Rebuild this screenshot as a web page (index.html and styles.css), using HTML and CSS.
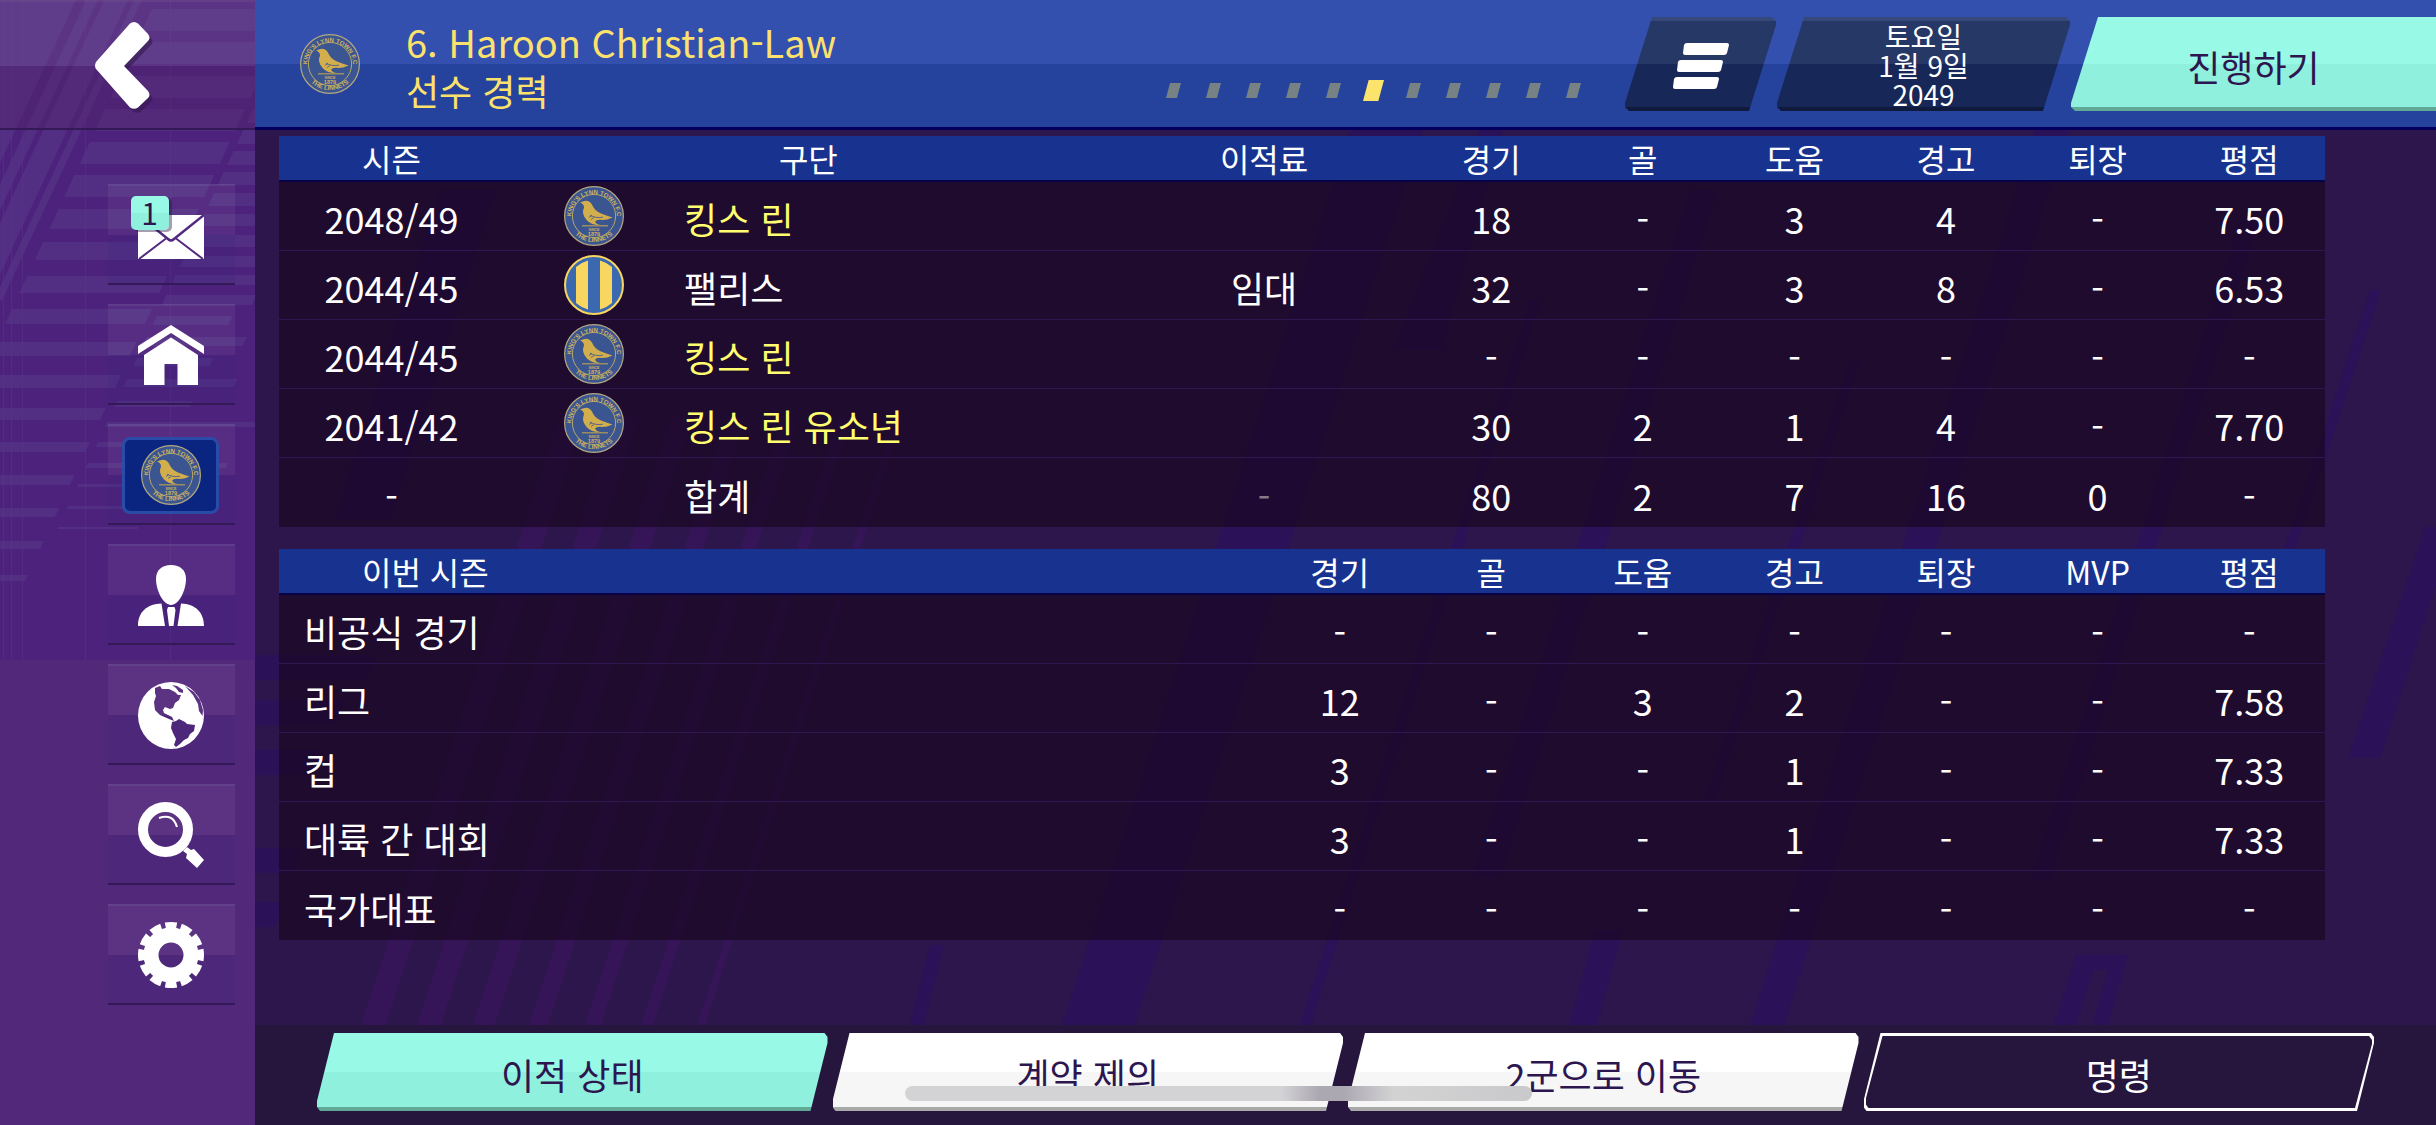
FILE: index.html
```html
<!DOCTYPE html>
<html lang="ko">
<head>
    <meta charset="UTF-8">
    <meta name="viewport" content="width=device-width, initial-scale=1.0">
    <title>선수 경력</title>
    <link rel="stylesheet" href="styles.css">
</head>
<body>
    <!-- shared club crests -->
    <svg class="defs" width="0" height="0" aria-hidden="true">
        <defs>
            <path id="arc-top" d="M7.5 36 A23 23 0 1 1 52.5 36"/>
            <path id="arc-bottom" d="M5 40 A27.5 27.5 0 0 0 55 40"/>
            <symbol id="crest-lynn" viewBox="0 0 60 60">
                <circle cx="30" cy="30" r="29.4" fill="#3a5590" stroke="#b5a981" stroke-width="1.2"/>
                <circle cx="30" cy="30" r="21.6" fill="none" stroke="#b5a768" stroke-width="1"/>
                <path fill="#d3ae4d" d="M16 16.6 L19.5 15.2 Q25 13.5 28 18.6 Q30 24.5 37 27.5 Q42 29.5 48.5 31.4 Q42 34.5 36 33.8 Q31 34 31.3 36 Q32 38 36 39 Q28.500 39.500 23 34.500 Q17 28 20 21.500 Q20 18 16 16.600Z"/>
                <path fill="none" stroke="#3a5590" stroke-width=".8" d="M26 29 Q31 32.5 39 31.2 M25 31.500 L28 29.500 M27 33.500 L30 31.500"/>
                <path stroke="#b39c55" stroke-width="1.2" d="M18 39.800 H44"/>
                <text x="30" y="44.600" class="crest-text" font-size="3.600" text-anchor="middle">SINCE</text>
                <text x="30" y="49.600" class="crest-text" font-size="5.600" text-anchor="middle">1879</text>
                <text class="crest-text" font-size="6.200" text-anchor="middle"><textPath href="#arc-top" startOffset="50%">KING'S LYNN TOWN F.C</textPath></text>
                <text class="crest-text" font-size="6.400" text-anchor="middle"><textPath href="#arc-bottom" startOffset="50%">THE LINNETS</textPath></text>
            </symbol>
            <symbol id="crest-palace" viewBox="0 0 60 60">
                <circle cx="30" cy="30" r="29" fill="#3b69b0" stroke="#f8d660" stroke-width="2"/>
                <path fill="#f8d660" d="M12 12 Q17 7.500 24 5.500 V54.500 Q17 52.500 12 48Z M36 5.500 Q43 7.500 48 12 V48 Q43 52.500 36 54.500Z"/>
            </symbol>
        </defs>
    </svg>

    <aside class="sidebar">
        <svg class="sidebar-art" viewBox="0 0 255 660" preserveAspectRatio="none" aria-hidden="true">
            <rect width="255" height="660" fill="#4d227c"/>
            <g fill="#532f84" transform="skewX(-25)">
                <path d="M0 0h76v400h-76z M86 0h12v300h-12z M104 0h24v310h-24z M134 0h8v300h-8z"/>
                <path d="M156 9h140v22h-140z M156 42h140v22h-140z M156 76h140v22h-140z M156 109h140v22h-140z M156 142h140v22h-140z M156 175h140v22h-140z M156 209h140v20h-140z M156 242h140v18h-140z M156 276h140v17h-140z M156 309h140v15h-140z M156 342h140v14h-140z M156 375h140v13h-140z M156 408h140v12h-140z M156 442h140v10h-140z M156 475h140v10h-140z M156 508h140v9h-140z M156 541h140v8h-140z M156 575h140v6h-140z"/>
                <path d="M304 88h110v14h-110z M304 109h110v14h-110z M304 130h110v14h-110z M304 151h110v14h-110z M304 172h110v13h-110z M304 193h110v13h-110z M304 214h110v12h-110z M304 235h90v12h-90z M304 256h90v11h-90z M304 275h90v10h-90z M304 295h90v10h-90z M304 316h76v9h-76z M304 337h100v9h-100z M304 358h76v8h-76z M304 379h110v8h-110z M304 401h76v6h-76z M304 422h160v5h-160z M304 442h100v5h-100z M304 463h140v5h-140z M304 484h90v3h-90z M304 506h76v3h-76z M304 527h80v2h-80z"/>
            </g>
            <path stroke="#5a3588" stroke-opacity=".5" d="M3.500 0V660 M11.500 0V660 M22.500 0V660 M85.500 0V660 M170.500 0V660"/>
        </svg>

        <button class="back" type="button" aria-label="뒤로">
            <svg viewBox="0 0 64 94" width="64" height="94" aria-hidden="true">
                <path d="M35 1.500 Q39 -1.500 43 1.500 L53 12 Q56 16 53 19 L29 44 L53 69 Q56 73 53 76 L43 85.500 Q39 88 35 85.500 L1 47 Q-1 44 1 40Z" transform="translate(3 4)" fill="#33194f" opacity=".6"/>
                <path d="M35 1.500 Q39 -1.500 43 1.500 L53 12 Q56 16 53 19 L29 44 L53 69 Q56 73 53 76 L43 85.500 Q39 88 35 85.500 L1 47 Q-1 44 1 40Z" fill="#fff"/>
            </svg>
        </button>

        <nav class="menu">
            <button class="menu-item" type="button" aria-label="메일">
                <span class="mail">
                    <svg viewBox="0 0 66 44" width="66" height="44" aria-hidden="true">
                        <rect width="66" height="44" fill="#fff"/>
                        <path fill="none" stroke="#532a80" stroke-width="2" d="M1 44 L28 23.500 M65 44 L38 23.500"/>
                        <path fill="none" stroke="#532a80" stroke-width="2.500" d="M0 0 L30 24 Q33 27 36 24 L66 0"/>
                    </svg>
                    <span class="badge">1</span>
                </span>
            </button>
            <button class="menu-item" type="button" aria-label="홈">
                <svg viewBox="0 0 66 60" width="66" height="60" fill="#fff" aria-hidden="true">
                    <path d="M33 0 L66 21 V29 L33 8 L0 29 V21Z"/>
                    <path d="M33 12.500 L60 30 V60 H39.500 V39 H26.500 V60 H6 V30Z"/>
                </svg>
            </button>
            <button class="menu-item" type="button" aria-label="구단">
                <span class="club"><svg class="crest" aria-hidden="true"><use href="#crest-lynn"/></svg></span>
            </button>
            <button class="menu-item" type="button" aria-label="감독">
                <svg viewBox="0 0 66 61" width="66" height="61" fill="#fff" aria-hidden="true">
                    <path d="M33 0 C42 0 48 5 48 14 C48 25 41 40 33 40 C25 40 18 25 18 14 C18 5 24 0 33 0Z"/>
                    <path d="M0 61 C0 47 9 39 23.500 38.500 L27 61Z M66 61 C66 47 57 39 43 38.500 L39.500 61Z M30 42 H36.500 L37.500 45 L35.500 61 H31 L29 45Z"/>
                </svg>
            </button>
            <button class="menu-item" type="button" aria-label="세계">
                <svg viewBox="0 0 66 67" width="66" height="67" aria-hidden="true">
                    <path fill="#fff" fill-rule="evenodd" d="M33 0 A33 33.500 0 0 1 33 67 A33 33.500 0 0 1 33 0Z
                        M17 6 L22 4 L24 7 L31 7 L37 10 L40 13 L43 13 L41 18 L37 21 L35 26 L32 27 L27 25 L25 28 L26 31 L30 33 L34 35 L36 39 L31 37 L22 33 L17 28 L16 20 L18 14 L17 11Z
                        M34 40 L38 39 L41 37 L47 40 L49 42 L57 43 L56 49 L52 52 L50 56 L46 58 L42 62 L38 65 L36 63 L38 57 L35 51 L33 46Z
                        M34 3 L39 4 L45 8 L45 11 L41 10 L38 6Z
                        M47 4 L56 10 L62 18 L65 28 L64.500 34 L61 29 L60 22 L55 13Z"/>
                </svg>
            </button>
            <button class="menu-item" type="button" aria-label="검색">
                <svg viewBox="0 0 66 66" width="66" height="66" aria-hidden="true">
                    <circle cx="27.500" cy="27.500" r="22.500" fill="none" stroke="#fff" stroke-width="10"/>
                    <path fill="none" stroke="#fff" stroke-width="2" d="M21 16 Q35 11 39 25"/>
                    <path fill="#fff" d="M45 49 L49 45 L53 48 L56 47 L66 58 L59 66 L48 56 L49 52Z"/>
                </svg>
            </button>
            <button class="menu-item" type="button" aria-label="설정">
                <svg viewBox="-33 -33 66 66" width="66" height="66" fill="none" stroke="#fff" aria-hidden="true">
                    <circle r="20" stroke-width="15"/>
                    <circle r="29.500" stroke-width="7" pathLength="12" stroke-dasharray=".72 .28" stroke-dashoffset=".36"/>
                </svg>
            </button>
        </nav>
    </aside>

    <main class="main">
        <svg class="main-art" viewBox="255 130 2181 895" preserveAspectRatio="none" aria-hidden="true">
            <path fill="#351558" d="M559 417h25L386 1025h-25z M615 417h24L441 1025h-24z M671 417h22L495 1025h-22z M727 417h19L548 1025h-19z M783 417h16L601 1025h-16z M839 417h12L653 1025h-12z M895 417h8L705 1025h-8z"/>
            <path fill="#2b1157" d="M1350 130h73L1135 1025h-73z M1530 300h11L1311 1025h-11z M1690 190h28L1500 878h-28z M2035 130h34L1784 1025h-34z M1850 360h11L1715 800h-11z M2240 220h20L2050 880h-20z M2370 290h11L2295 550h-11z M2425 527h30L2380 758h-32z M930 945h14L924 1025h-14z M1595 930h28L1597 1025h-28z M440 190h56L390 520h-56z M2076 955h52L2108 1025h-16l16 -55h-14l-18 55h-22z M1480 130h22L1442 350h-50z"/>
            <path fill="#2b1157" d="M255 655h120l-8 25H255z M255 700h90l-8 25H255z M255 750h65l-8 25H255z M255 848h48l-8 25H255z M255 902h28l-8 25H255z"/>
        </svg>

        <header class="topbar">
            <svg class="crest" role="img" aria-label="킹스 린"><use href="#crest-lynn"/></svg>
            <div class="title">
                <h1>6. Haroon Christian-Law</h1>
                <p>선수 경력</p>
            </div>
            <div class="pager" aria-hidden="true">
                <i></i><i></i><i></i><i></i><i></i><i class="active"></i><i></i><i></i><i></i><i></i><i></i>
            </div>
            <div class="actions">
                <button class="slant dark list" type="button" aria-label="메뉴">
                    <svg viewBox="0 0 56 46" width="56" height="46" fill="#fff" aria-hidden="true">
                        <path d="M14 0H54Q56 0 56 2L54 10Q53.500 12 51 12H12Q10 12 10 10L11 2Q11.500 0 14 0Z"/>
                        <path d="M8 17H48Q50 17 50 19L48 27Q47.500 29 45 29H6Q4 29 4 27L5 19Q5.500 17 8 17Z"/>
                        <path d="M4 34H44Q46 34 46 36L44 44Q43.500 46 41 46H2Q0 46 0 44L1 36Q1.500 34 4 34Z"/>
                    </svg>
                </button>
                <div class="slant dark date">토요일<br>1월 9일<br>2049</div>
                <button class="slant mint continue" type="button">진행하기</button>
            </div>
        </header>

        <div class="content">
            <table class="career">
                <colgroup>
                    <col class="col-season"><col class="col-crest"><col><col class="col-fee">
                    <col class="col-stat"><col class="col-stat"><col class="col-stat"><col class="col-stat"><col class="col-stat"><col class="col-stat">
                </colgroup>
                <thead>
                    <tr><th>시즌</th><th colspan="2">구단</th><th>이적료</th><th>경기</th><th>골</th><th>도움</th><th>경고</th><th>퇴장</th><th>평점</th></tr>
                </thead>
                <tbody>
                    <tr>
                        <td>2048/49</td>
                        <td class="logo"><svg class="crest" aria-hidden="true"><use href="#crest-lynn"/></svg></td>
                        <td class="name own">킹스 린</td>
                        <td></td><td>18</td><td>-</td><td>3</td><td>4</td><td>-</td><td>7.50</td>
                    </tr>
                    <tr>
                        <td>2044/45</td>
                        <td class="logo"><svg class="crest" aria-hidden="true"><use href="#crest-palace"/></svg></td>
                        <td class="name">팰리스</td>
                        <td>임대</td><td>32</td><td>-</td><td>3</td><td>8</td><td>-</td><td>6.53</td>
                    </tr>
                    <tr>
                        <td>2044/45</td>
                        <td class="logo"><svg class="crest" aria-hidden="true"><use href="#crest-lynn"/></svg></td>
                        <td class="name own">킹스 린</td>
                        <td></td><td>-</td><td>-</td><td>-</td><td>-</td><td>-</td><td>-</td>
                    </tr>
                    <tr>
                        <td>2041/42</td>
                        <td class="logo"><svg class="crest" aria-hidden="true"><use href="#crest-lynn"/></svg></td>
                        <td class="name own">킹스 린 유소년</td>
                        <td></td><td>30</td><td>2</td><td>1</td><td>4</td><td>-</td><td>7.70</td>
                    </tr>
                    <tr>
                        <td>-</td>
                        <td></td>
                        <td class="name">합계</td>
                        <td class="muted">-</td><td>80</td><td>2</td><td>7</td><td>16</td><td>0</td><td>-</td>
                    </tr>
                </tbody>
            </table>

            <table class="season">
                <colgroup>
                    <col>
                    <col class="col-stat"><col class="col-stat"><col class="col-stat"><col class="col-stat"><col class="col-stat"><col class="col-stat"><col class="col-stat">
                </colgroup>
                <thead>
                    <tr><th class="first">이번 시즌</th><th>경기</th><th>골</th><th>도움</th><th>경고</th><th>퇴장</th><th>MVP</th><th>평점</th></tr>
                </thead>
                <tbody>
                    <tr><td class="first">비공식 경기</td><td>-</td><td>-</td><td>-</td><td>-</td><td>-</td><td>-</td><td>-</td></tr>
                    <tr><td class="first">리그</td><td>12</td><td>-</td><td>3</td><td>2</td><td>-</td><td>-</td><td>7.58</td></tr>
                    <tr><td class="first">컵</td><td>3</td><td>-</td><td>-</td><td>1</td><td>-</td><td>-</td><td>7.33</td></tr>
                    <tr><td class="first">대륙 간 대회</td><td>3</td><td>-</td><td>-</td><td>1</td><td>-</td><td>-</td><td>7.33</td></tr>
                    <tr><td class="first">국가대표</td><td>-</td><td>-</td><td>-</td><td>-</td><td>-</td><td>-</td><td>-</td></tr>
                </tbody>
            </table>
        </div>

        <footer class="bottombar">
            <button class="tab mint" type="button">이적 상태</button>
            <button class="tab white" type="button">계약 제의</button>
            <button class="tab white" type="button">2군으로 이동</button>
            <button class="tab outline" type="button"><span>명령</span></button>
        </footer>
    </main>

    <div class="home-indicator"></div>
</body>
</html>
```

FILE: styles.css
```css
* {
    box-sizing: border-box;
}
body {
    margin: 0;
    display: flex;
    min-height: 100vh;
    background-color: #2d164b;
    color: #fff;
    font-family: "Noto Sans CJK KR", "Noto Sans", sans-serif;
    font-size: 36px;
    line-height: 48px;
}
button {
    margin: 0;
    padding: 0;
    border: none;
    background: none;
    color: inherit;
    font: inherit;
    cursor: pointer;
}
svg {
    display: block;
}
.defs {
    position: absolute;
}
.crest {
    width: 60px;
    height: 60px;
}
.crest-text {
    fill: #d0b360;
    font-family: "Liberation Sans", sans-serif;
    font-weight: bold;
}

/* sidebar */
.sidebar {
    position: relative;
    flex: 0 0 255px;
    background-color: #52287b;
}
.sidebar-art {
    position: absolute;
    top: 0;
    left: 0;
    width: 100%;
    height: 660px;
}
.back {
    position: relative;
    display: flex;
    align-items: center;
    width: 100%;
    height: 130px;
    padding-left: 95px;
    padding-top: 7px;
    border-top: 2px solid rgba(255,255,255,0.13);
    border-bottom: 2px solid #351857;
    background: linear-gradient(rgba(120,85,150,0.35) 64px, rgba(80,35,105,0.4) 64px);
}
.menu {
    position: relative;
    display: flex;
    flex-direction: column;
    gap: 19px;
    padding: 54px 20px 0 108px;
}
.menu-item {
    display: flex;
    align-items: center;
    justify-content: center;
    height: 101px;
    padding: 1px 2px 0 0;
    border-top: 2px solid rgba(255,255,255,0.12);
    border-bottom: 2px solid #351857;
    background: linear-gradient(rgba(255,255,255,0.05) 49px, rgba(55,35,120,0.2) 49px);
}
.mail {
    position: relative;
    padding-top: 4px;
}
.badge {
    position: absolute;
    top: -15px;
    left: -7px;
    width: 38px;
    height: 34px;
    border-radius: 5px;
    background: linear-gradient(#98fae6 50%, #8ff0dd 50%);
    box-shadow: 3px 2px 0 rgba(30,15,60,0.4);
    color: #2d1650;
    font-size: 30px;
    line-height: 32px;
}
.club {
    display: flex;
    align-items: center;
    justify-content: center;
    width: 97px;
    height: 77px;
    border: 3px solid #2b4ba8;
    border-radius: 8px;
    background-color: #0a257f;
}

/* main column */
.main {
    position: relative;
    flex: 1;
    display: flex;
    flex-direction: column;
    min-width: 0;
}
.main-art {
    position: absolute;
    top: 130px;
    left: 0;
    width: 100%;
    height: calc(100% - 230px);
}
.topbar {
    position: relative;
    display: flex;
    align-items: flex-start;
    height: 130px;
    padding-left: 45px;
    border-bottom: 3px solid #00005c;
    background: linear-gradient(#3350af 64px, #25439c 64px);
}
.topbar .crest {
    margin-top: 34px;
}
.title {
    flex: 1;
    margin-left: 46px;
    padding-top: 18px;
    color: #fce26c;
}
.title h1,
.title p {
    margin: 0;
    font-size: 36px;
    font-weight: normal;
}
.title h1 {
    font-size: 38px;
}
.pager {
    display: flex;
    align-items: center;
    gap: 25px;
    height: 21px;
    margin: 80px 44px 0 0;
}
.pager i {
    width: 15px;
    height: 15px;
    background-color: #768284;
    clip-path: polygon(27% 0, 100% 0, 73% 100%, 0 100%);
}
.pager .active {
    width: 21px;
    height: 21px;
    margin: 0 -3px;
    background-color: #fbe36c;
}
.actions {
    display: flex;
    gap: 1px;
    padding-top: 17px;
}
.slant {
    display: flex;
    align-items: center;
    justify-content: center;
    height: 94px;
    padding-top: 3px;
    clip-path: polygon(27px 0, calc(100% - 4px) 0, 100% 4px, 100% 8px, calc(100% - 27px) 100%, 4px 100%, 0 calc(100% - 4px), 0 calc(100% - 8px));
}
.dark {
    background: linear-gradient(#37487a 4px, #263866 4px, #263866 47px, #172757 47px, #172757 90px, #0f1a3d 90px);
}
.mint {
    background: linear-gradient(#98fae6 50%, #8ff0dd 50%, #8ff0dd calc(100% - 4px), #5fa996 calc(100% - 4px));
    color: #2d1650;
}
.list {
    width: 151px;
}
.date {
    width: 293px;
    font-size: 28px;
    line-height: 29px;
    text-align: center;
}
.continue {
    width: 365px;
    clip-path: polygon(27px 0, 100% 0, 100% 100%, 4px 100%, 0 calc(100% - 4px), 0 calc(100% - 8px));
}

/* tables */
.content {
    position: relative;
    flex: 1;
    padding: 6px 111px 23px 24px;
}
table {
    width: 100%;
    table-layout: fixed;
    border-spacing: 0;
    text-align: center;
}
.season {
    margin-top: 22px;
}
.col-season {
    width: 11%;
}
.col-crest {
    width: 8.8%;
}
.col-fee {
    width: 14.8%;
}
.col-stat {
    width: 7.41%;
}
th {
    height: 46px;
    padding: 0 0 1px;
    border-bottom: 2px solid #0a0246;
    background-color: #17338f;
    font-size: 32px;
    font-weight: normal;
    line-height: 40px;
}
td {
    height: 69px;
    padding: 4px 0 0;
    border-bottom: 1px solid #2f1752;
    background-color: rgba(22,5,25,0.6);
}
tr:last-child td {
    border-bottom: none;
}
.logo {
    padding: 4px 0;
}
.logo .crest {
    margin: 0 auto;
}
.name,
.first {
    text-align: left;
}
.own {
    color: #ffff70;
}
.muted {
    color: #85798a;
}
th.first {
    padding-left: 83px;
}
td.first {
    padding-left: 25px;
}

/* bottom buttons */
.bottombar {
    position: relative;
    display: grid;
    grid-template-columns: repeat(4, 1fr);
    gap: 5px;
    height: 100px;
    padding: 8px 62px 14px;
    background-color: #26153d;
}
.tab {
    padding-top: 4px;
    clip-path: polygon(17px 0, calc(100% - 3px) 0, 100% 4px, 100% 10px, calc(100% - 17px) 100%, 3px 100%, 0 calc(100% - 4px), 0 calc(100% - 10px));
}
.white {
    background: linear-gradient(#fff 50%, #f6f6f6 50%, #f6f6f6 calc(100% - 4px), #a9a9a9 calc(100% - 4px));
    color: #2d1650;
}
.outline {
    padding: 3px 2px;
    background-color: #fff;
}
.outline span {
    display: flex;
    align-items: center;
    justify-content: center;
    height: 100%;
    padding-top: 4px;
    background-color: #26153d;
    clip-path: polygon(17px 0, calc(100% - 3px) 0, 100% 4px, 100% 8px, calc(100% - 17px) 100%, 3px 100%, 0 calc(100% - 4px), 0 calc(100% - 8px));
}

.home-indicator {
    position: fixed;
    bottom: 24px;
    left: 50%;
    width: 627px;
    height: 15px;
    margin-left: -313px;
    border-radius: 8px;
    background: linear-gradient(90deg, #d3d3d5 60%, #aca8b2 66%, #aca8b2 70%, #d3d3d3 78%, #c9c9cc);
}
```
